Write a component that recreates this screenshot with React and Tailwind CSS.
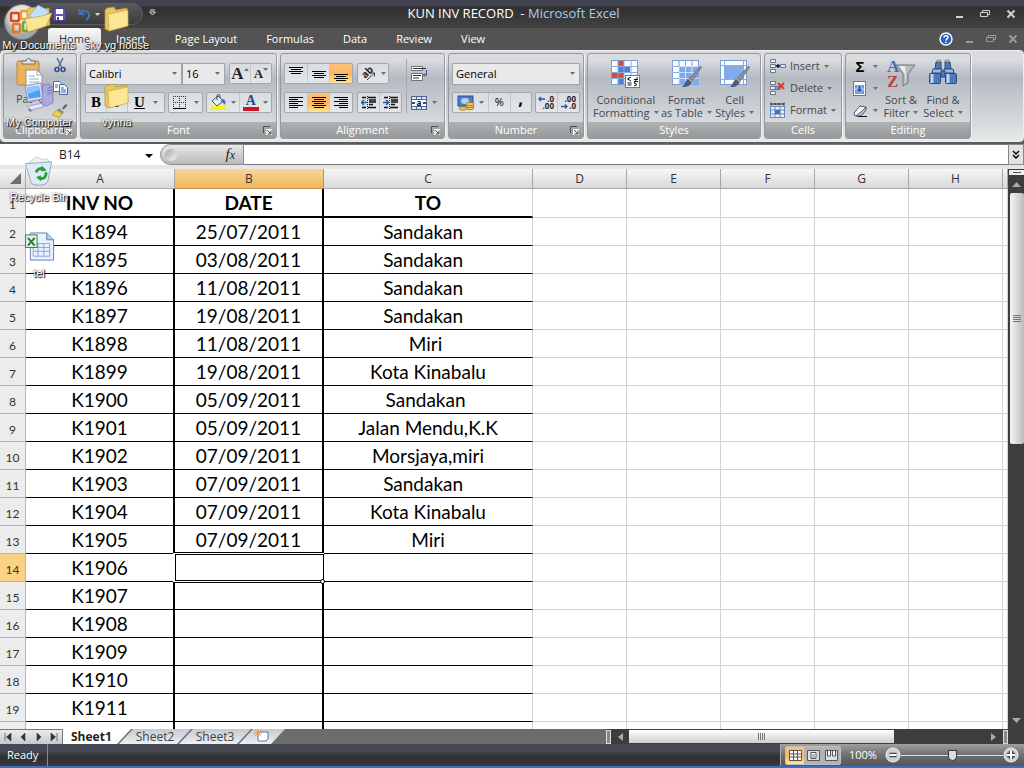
import { useState } from "react";

// some of the town names were typed with trailing spaces, which shifts them when centered
const ROWS = [
  ["K1894", "25/07/2011", "Sandakan  "],
  ["K1895", "03/08/2011", "Sandakan  "],
  ["K1896", "11/08/2011", "Sandakan  "],
  ["K1897", "19/08/2011", "Sandakan  "],
  ["K1898", "11/08/2011", "Miri "],
  ["K1899", "19/08/2011", "Kota Kinabalu"],
  ["K1900", "05/09/2011", "Sandakan "],
  ["K1901", "05/09/2011", "Jalan Mendu,K.K"],
  ["K1902", "07/09/2011", "Morsjaya,miri"],
  ["K1903", "07/09/2011", "Sandakan  "],
  ["K1904", "07/09/2011", "Kota Kinabalu"],
  ["K1905", "07/09/2011", "Miri"],
  ["K1906", "", ""],
  ["K1907", "", ""],
  ["K1908", "", ""],
  ["K1909", "", ""],
  ["K1910", "", ""],
  ["K1911", "", ""],
];
const TABS = ["Home", "Insert", "Page Layout", "Formulas", "Data", "Review", "View"];
const EMPTY_COLS = ["D", "E", "F", "G", "H", ""];

/* ---------- small pieces ---------- */

function Caret({ className = "" }) {
  return (
    <svg width="5" height="3" viewBox="0 0 5 3" className={`shrink-0 ${className}`}>
      <path d="M0 0h5L2.500 3z" fill="#6b6e72" />
    </svg>
  );
}

function Launcher({ name }) {
  return (
    <button aria-label={`${name} options`} className="absolute right-1 top-1">
      <svg width="9" height="9" viewBox="0 0 9 9">
        <path d="M.5 7V.5H7" fill="none" stroke="#4c4f52" />
        <path d="M3 3h6v6H3z" fill="#f5f5f5" />
        <path d="M4 4l4 4M8 4.500V8H4.500" fill="none" stroke="#444" />
      </svg>
    </button>
  );
}

function Group({ name, launcher, className, children }) {
  return (
    <section
      aria-label={name}
      className={`flex shrink-0 flex-col overflow-hidden rounded-[3px] border border-[#96999d] shadow-[1px_1px_0_#f2f3f4] ${className}`}
    >
      <div className="min-h-0 flex-1">{children}</div>
      <div className="relative h-4 bg-linear-to-b from-[#b0b3b3] to-[#959898] text-center leading-4 text-white">
        {name}
        {launcher && <Launcher name={name} />}
      </div>
    </section>
  );
}

function ButtonBox({ className = "", children }) {
  return (
    <div className={`flex h-[21px] divide-x divide-[#c3c7cb] overflow-hidden rounded-[2px] border border-[#a3a8ad] bg-linear-to-b from-[#d9dde2] to-[#e3e7ea] ${className}`}>
      {children}
    </div>
  );
}

function Tool({ label, active, children, className = "flex-1" }) {
  return (
    <button
      aria-label={label}
      className={`flex items-center justify-center gap-1 ${className} ${active ? "bg-linear-to-b from-[#fcc07c] via-[#fdb75c] to-[#fde58e]" : ""}`}
    >
      {children}
    </button>
  );
}

function Dropdown({ label, value, className }) {
  return (
    <div className={`relative h-[22px] border border-[#a0a4a8] bg-[#e9e9e9] ${className}`}>
      <select aria-label={label} defaultValue={value} className="h-full w-full appearance-none pl-[3px] text-black outline-none">
        <option>{value}</option>
      </select>
      <Caret className="pointer-events-none absolute right-1 top-2" />
    </div>
  );
}

/* ---------- ribbon icons ---------- */

// each line is [x, width]
function Lines({ lines, top = 2 }) {
  return (
    <svg width="16" height="16" viewBox="0 0 16 16" shapeRendering="crispEdges">
      {lines.map(([x, w], i) => (
        <rect key={i} x={x} y={top + i * 2} width={w} height="1" fill="#000" />
      ))}
    </svg>
  );
}

function IndentIcon({ right }) {
  return (
    <svg width="16" height="16" viewBox="0 0 16 16">
      <path d="M1 2.500h4M7 2.500h8M8 5h7M8 7h7M8 9.500h4M1 12.500h4M7 12.500h8" stroke="#111" strokeWidth="1.300" />
      <path d="M6.500 1v14" stroke="#222" strokeDasharray="1 1" />
      <path d={right ? "M0 7.500h5M3 5l2.500 2.500L3 10" : "M6 7.500H1M3 5L.5 7.500 3 10"} fill="none" stroke="#2e55a8" strokeWidth="1.500" />
    </svg>
  );
}

function PasteIcon() {
  return (
    <svg width="28" height="30" viewBox="0 0 28 30">
      <rect x="1" y="3" width="22" height="24" rx="2" fill="#eab457" stroke="#b8863a" />
      <path d="M6 6V3h4a2.500 2.500 0 0 1 5 0h4v3z" fill="#dfe3e8" stroke="#6d7278" />
      <path d="M10 12h11l5 5v12H10z" fill="#fff" stroke="#8795aa" />
      <path d="M21 12v5h5M13 18h6M13 21h10M13 24h10" fill="none" stroke="#9aa9c2" />
    </svg>
  );
}

function CutIcon() {
  return (
    <svg width="12" height="15" viewBox="0 0 12 15" fill="none">
      <path d="M3 0l4.500 9M9 0L4.500 9" stroke="#5c7197" strokeWidth="1.500" />
      <circle cx="3" cy="11.500" r="2" stroke="#2c4f94" strokeWidth="1.600" />
      <circle cx="9" cy="11.500" r="2" stroke="#2c4f94" strokeWidth="1.600" />
    </svg>
  );
}

function CopyIcon() {
  return (
    <svg width="15" height="14" viewBox="0 0 15 14" stroke="#4a67a0">
      <path d="M.5.5h6l2 2v8h-8z" fill="#fff" />
      <path d="M6.500 3.500h5l3 3v7h-8z" fill="#eaf1ff" />
      <path d="M2 4h3M2 6h3M8 7h3M8 9h5M8 11h5" />
    </svg>
  );
}

function BrushIcon() {
  return (
    <svg width="16" height="15" viewBox="0 0 16 15">
      <path d="M10 5l4-4 1.500 1.500-4 4z" fill="#6e6046" />
      <path d="M7 5l5 4-1.500 2-5.500-4z" fill="#8a8f96" />
      <path d="M5 7l5 4-3 3.500L0 12z" fill="#f2d24c" stroke="#a98a28" strokeWidth=".7" />
    </svg>
  );
}

function BordersIcon() {
  return (
    <svg width="13" height="13" viewBox="0 0 13 13" fill="none" stroke="#333" shapeRendering="crispEdges">
      <path d="M0 .5h13M.5 0v12M12.500 0v12M6.500 0v12M0 6.500h13" strokeDasharray="1 1" />
      <path d="M0 12.500h13" stroke="#000" />
    </svg>
  );
}

function FillIcon() {
  return (
    <svg width="18" height="17" viewBox="0 0 18 17">
      <path d="M2 12h15v4H1z" fill="#f7f21c" />
      <path d="M3 7l6-5 5 5-6 5z" fill="#e7edf5" stroke="#3d567e" />
      <path d="M8 6V2a1.500 1.500 0 0 1 3 0v2" fill="none" stroke="#444" />
      <path d="M13 5c3 0 4 3 3 6-1-1-2-3-4-3z" fill="#3d6cb5" />
    </svg>
  );
}

function WrapIcon() {
  return (
    <svg width="17" height="16" viewBox="0 0 17 16">
      <path d="M.5.5h11v4H.5zM.5 7.500h11v7H.5z" fill="#fff" stroke="#70757c" />
      <path d="M2 2.500h13M2 9.500h8M2 12h6" stroke="#333" />
      <path d="M15.500 4v5h-3M14 7.500L12.500 9l1.500 1.500" fill="none" stroke="#2e4f8d" />
    </svg>
  );
}

function MergeIcon() {
  return (
    <svg width="16" height="16" viewBox="0 0 16 16">
      <rect x=".5" y="1.500" width="15" height="13" fill="#dce7fa" stroke="#4a6494" />
      <path d="M1 4.500h14M1 11.500h14M5.500 1v3M10.500 1v3M5.500 12v3M10.500 12v3" stroke="#4a6494" />
      <rect x="1" y="5" width="14" height="6" fill="#fff" />
      <path d="M1 8h3M12 8h3" stroke="#111" strokeWidth="1.500" />
      <text x="8" y="10.500" textAnchor="middle" fontSize="8" fontWeight="bold">a</text>
    </svg>
  );
}

function CurrencyIcon() {
  return (
    <svg width="18" height="16" viewBox="0 0 18 16">
      <rect x="1" y="1" width="15" height="10" fill="#4c7fca" stroke="#264f94" />
      <ellipse cx="8" cy="6" rx="4" ry="3" fill="#b7d2f3" />
      <g fill="#f1c95a" stroke="#8f681d" strokeWidth=".7">
        <ellipse cx="13" cy="13" rx="4" ry="1.700" />
        <ellipse cx="13" cy="11" rx="4" ry="1.700" />
        <ellipse cx="13" cy="9" rx="4" ry="1.700" />
        <ellipse cx="6" cy="13.500" rx="4" ry="1.700" />
      </g>
    </svg>
  );
}

function DecimalIcon({ less }) {
  return (
    <svg width="18" height="19" viewBox="0 0 18 19" fontSize="8" fontWeight="bold" fill="#222" className="overflow-visible">
      <text x="16" y="9" textAnchor="end">{less ? ".00" : ".0"}</text>
      <text x="16" y="16" textAnchor="end">{less ? ".0" : ".00"}</text>
      <path d={less ? "M1 13.500h6M5 11.500l2 2-2 2" : "M7 6H1M3 4L1 6l2 2"} fill="none" stroke="#2e55a8" strokeWidth="1.300" />
    </svg>
  );
}

function GridBase({ children }) {
  return (
    <svg width="31" height="30" viewBox="0 0 31 30">
      <rect x="1.500" y="1.500" width="26" height="24" fill="#fafcff" stroke="#7a9fd6" />
      {children}
    </svg>
  );
}

function PaintBrush() {
  return (
    <g>
      <path d="M29.500 7l1 1.500-9 13-3-2.500z" fill="#8a9098" stroke="#5c6168" strokeWidth=".6" />
      <path d="M18.500 19l3 2.500c-1 5-6 7-10.500 6.500 3-2 3-7 7.500-9z" fill="#4a5c86" />
      <path d="M18 19l4 3-1 1.500-4-3z" fill="#d89c4e" />
    </g>
  );
}

function ConditionalIcon() {
  return (
    <GridBase>
      <path d="M8 2h6v5H8zM2 14h12v6H2z" fill="#dc4a3c" />
      <path d="M8 8h12v6H8zM8 20h6v5H8z" fill="#4f7ed6" />
      <path d="M1.500 7.500h26M1.500 13.500h26M1.500 19.500h26M8 2v23M14 2v23M21 2v23" stroke="#8babdb" />
      <rect x="15.500" y="16.500" width="14" height="12" fill="#fff" stroke="#777" />
      <path d="M21 18l-3.500 2 3.500 2M17.500 24h4M17.500 26h4M24 20.500h4M24 22.500h4M27.500 18l-3 6M24 24l3 1.500-3 1.500" fill="none" stroke="#111" />
    </GridBase>
  );
}

function FormatTableIcon() {
  return (
    <GridBase>
      <path d="M8 8h20v18H8z" fill="#7fa9ea" />
      <path d="M1.500 7.500h26M1.500 13.500h26M1.500 19.500h26M8 2v23M14.500 2v23M21 2v23" stroke="#cfe0fa" />
      <path d="M8 2v5M14.500 2v5M21 2v5M2 7.500h6M2 13.500h6M2 19.500h6" stroke="#8babdb" />
      <PaintBrush />
    </GridBase>
  );
}

function CellStylesIcon() {
  return (
    <GridBase>
      <rect x="6" y="7" width="18" height="13" fill="#82abee" />
      <path d="M1.500 6.500h26M1.500 20.500h26M5.500 2v23M24.500 2v23" stroke="#8babdb" />
      <PaintBrush />
    </GridBase>
  );
}

function CellsIcon({ kind }) {
  if (kind === "Format") {
    return (
      <svg width="17" height="17" viewBox="0 0 17 17">
        <path d="M2 2h13M2 .5v3M15 .5v3M6 1v2M10 1v2" stroke="#222" />
        <rect x="1.500" y="4.500" width="14" height="11" fill="#e4edfb" stroke="#6988bd" />
        <path d="M1 8h15M1 12h15M6 5v11M11 5v11" stroke="#6988bd" />
        <rect x="6" y="8" width="5" height="4" fill="#3e70c4" />
      </svg>
    );
  }
  return (
    <svg width="17" height="17" viewBox="0 0 17 17">
      <path d="M1.500 1.500h5v3h-5zM1.500 6.500h5v3h-5zM1.500 11.500h5v3h-5z" fill="#f1f6fd" stroke="#6b7788" />
      {kind === "Insert" ? (
        <g>
          <path d="M11.500 6.500h5v3h-5z" fill="#dfeafc" stroke="#5577ad" />
          <path d="M7 8h4M9 6v4" stroke="#111" strokeWidth="1.300" />
        </g>
      ) : (
        <g>
          <path d="M6 6.500h5v3H6z" fill="#7ba4e4" stroke="#5577ad" />
          <path d="M9 3l6 6M15 3l-6 6" stroke="#dd3b2f" strokeWidth="2" />
        </g>
      )}
    </svg>
  );
}

function FillDownIcon() {
  return (
    <svg width="14" height="16" viewBox="0 0 14 16">
      <rect x=".5" y=".5" width="12" height="14" fill="#f7faff" stroke="#5879b2" />
      <path d="M2 4h9v9H2z" fill="#6e9ce6" />
      <path d="M5 4h3v4h2.500l-4 4-4-4H5z" fill="#2358b8" stroke="#fff" strokeWidth=".6" />
    </svg>
  );
}

function EraserIcon() {
  return (
    <svg width="15" height="14" viewBox="0 0 15 14" stroke="#4a5260">
      <path d="M1 9l6-7 6 1-5 8-6 1z" fill="#f8fafc" />
      <path d="M8 8l5-5v3l-5 6H3z" fill="#b9c7de" />
      <path d="M5 12.500h9" stroke="#111" />
    </svg>
  );
}

function SortIcon() {
  return (
    <svg width="30" height="30" viewBox="0 0 30 30">
      <text x="1" y="13" fontSize="17" fontWeight="bold" fontFamily="Liberation Serif, serif" fill="#3f6fb9">A</text>
      <text x="1" y="28" fontSize="17" fontWeight="bold" fontFamily="Liberation Serif, serif" fill="#b64545">Z</text>
      <path d="M10 6h19l-7 9v9l-5 3V15z" fill="#b9bcbf" stroke="#707478" />
      <path d="M13 7h6l1 8-1 9V15z" fill="#eceded" />
    </svg>
  );
}

function BinocularsIcon() {
  return (
    <svg width="30" height="28" viewBox="0 0 30 28">
      <g fill="#4f79b9" stroke="#2c4a80">
        <path d="M8 3h5v7H7zM17 3h5l1 7h-6z" />
        <path d="M5 10h9v4H4zM16 10h9l1 4H16z" fill="#9fb9de" />
        <rect x="1.500" y="14.500" width="11" height="10" rx="1" />
        <rect x="17.500" y="14.500" width="11" height="10" rx="1" />
        <path d="M13 12h4v6h-4z" />
      </g>
      <path d="M4 15v9M20 15v9" stroke="#bcd2f3" strokeWidth="3" />
      <path d="M9 1h4v2H9zM17 1h4v2h-4z" fill="#c7ccd4" stroke="#555" strokeWidth=".5" />
    </svg>
  );
}

/* ---------- header ---------- */

function OfficeButton() {
  return (
    <button aria-label="Office Button" className="absolute left-1 top-1 z-10">
      <svg width="37" height="37" viewBox="0 0 37 37">
        <defs>
          <radialGradient id="orb" cx=".5" cy=".35">
            <stop offset="0" stopColor="#ffffff" />
            <stop offset=".7" stopColor="#dcdcdc" />
            <stop offset="1" stopColor="#a6a6a6" />
          </radialGradient>
        </defs>
        <circle cx="18" cy="18" r="17.500" fill="url(#orb)" stroke="#777" />
        <g fill="none" strokeWidth="2.500">
          <rect x="7" y="9" width="8" height="8" rx="1" stroke="#d8471f" />
          <rect x="17" y="7" width="7" height="8" rx="1" stroke="#f0a02c" />
          <rect x="9" y="20" width="7" height="8" rx="1" stroke="#e2791f" />
          <rect x="19" y="18" width="8" height="9" rx="1" stroke="#69a93f" />
        </g>
      </svg>
    </button>
  );
}

function WindowButtons({ dim }) {
  return (
    <div className={`flex items-center ${dim ? "gap-3 text-[#9a9a9a]" : "gap-4 text-[#d0d0d0]"}`}>
      <button aria-label="Minimize">
        <svg width="9" height="10" viewBox="0 0 9 10"><path d="M1 8h7" stroke="currentColor" strokeWidth="2" /></svg>
      </button>
      <button aria-label="Restore">
        <svg width="10" height="10" viewBox="0 0 10 10" fill="none" stroke="currentColor">
          <path d="M.5 3.500h7v4h-7zM2.500 3V1.500h7v4H8" />
        </svg>
      </button>
      <button aria-label="Close">
        <svg width="10" height="10" viewBox="0 0 10 10"><path d="M1.500 1.500l7 7M8.500 1.500l-7 7" stroke="currentColor" strokeWidth="2" /></svg>
      </button>
    </div>
  );
}

function TitleBar() {
  return (
    <div className="relative flex h-7 shrink-0 items-center justify-end bg-linear-to-b from-[#424350] from-20% via-[#303030] via-25% to-[#424242] pr-2 text-white">
      <div className="absolute left-10 top-[3px] flex h-[22px] w-[103px] items-center gap-3 rounded-r-full border border-[#5c5c5c] bg-linear-to-b from-[#5a5a5a] to-[#3c3c3c] pl-3">
        <button aria-label="Save">
          <svg width="13" height="13" viewBox="0 0 13 13">
            <path d="M.5.5h12v12h-12z" fill="#6457b8" stroke="#4c3f94" />
            <path d="M3 1h7v5H3zM3 8h7v4H3z" fill="#fff" />
            <path d="M4 9h2v3H4z" fill="#4c3f94" />
          </svg>
        </button>
        <button aria-label="Undo" className="flex items-center gap-1">
          <svg width="13" height="13" viewBox="0 0 13 13" fill="none" stroke="#456fc0" strokeWidth="2">
            <path d="M1.500 1v5h5M2 6c2-5 10-4 9 2-.3 2-1.500 3-3 4" />
          </svg>
          <svg width="5" height="3" viewBox="0 0 5 3"><path d="M0 0h5L2.500 3z" fill="#ddd" /></svg>
        </button>
      </div>
      <button aria-label="Customize Quick Access Toolbar" className="absolute left-[149px] top-[9px]">
        <svg width="7" height="7" viewBox="0 0 7 7"><path d="M1 1h5" stroke="#ddd" /><path d="M.5 3h6l-3 3z" fill="none" stroke="#ddd" /></svg>
      </button>
      <h1 className="flex-1 whitespace-pre pl-[72px] text-center text-[13px]">
        KUN INV RECORD  - <span className="text-[#a9cdf5]">Microsoft Excel</span>
      </h1>
      <WindowButtons />
    </div>
  );
}

function TabBar() {
  const [tab, setTab] = useState("Home");
  return (
    <nav className="flex h-[22px] shrink-0 items-end bg-[#535353] pl-12 pr-[6px] text-[11px] text-white">
      {TABS.map((t) => (
        <button
          key={t}
          onClick={() => setTab(t)}
          className={`h-[22px] px-[11px] ${t === tab ? "mr-1 rounded-t-[3px] bg-linear-to-b from-[#f7f7f7] to-[#d5d7db] text-[#333]" : "mr-[7px]"}`}
        >
          {t}
        </button>
      ))}
      <div className="ml-auto flex h-full items-center gap-3">
        <button aria-label="Help">
          <svg width="14" height="14" viewBox="0 0 14 14">
            <circle cx="7" cy="7" r="6" fill="#2c62c4" stroke="#fff" strokeWidth="1.400" />
            <path d="M5 5.500c0-2.500 4-2.300 4-.2C9 7 7 6.800 7 8.500M7 9.500V11" fill="none" stroke="#fff" strokeWidth="1.400" />
          </svg>
        </button>
        <WindowButtons dim />
      </div>
    </nav>
  );
}

function BigTool({ icon, lines, className }) {
  return (
    <button className={`flex flex-col items-center pt-[5px] ${className}`}>
      <span className="flex h-[34px] items-start">{icon}</span>
      <span className="whitespace-nowrap leading-[13px]">{lines[0]}</span>
      <span className="flex items-center gap-1 whitespace-nowrap leading-[13px]">
        {lines[1]}
        <Caret />
      </span>
    </button>
  );
}

function Ribbon() {
  return (
    <div className="shrink-0 bg-[#5a5c5e] pb-[2px] text-[11px] text-[#45484c]">
      <div className="flex h-[92px] gap-[3px] overflow-hidden rounded-[4px] border border-[#eceded] bg-linear-to-b from-[#d9dbdf] from-10% via-[#b5bac2] via-30% to-[#e6e9e9] px-[2px] py-[2px]">
        <Group name="Clipboard" launcher className="w-[74px]">
          <div className="flex h-full justify-between pl-3 pr-2 pt-1">
            <button className="flex flex-col items-center">
              <PasteIcon />
              <span className="mt-1 leading-[13px]">Paste</span>
              <Caret className="mt-1" />
            </button>
            <div className="flex flex-col items-center justify-between pb-1">
              <button aria-label="Cut"><CutIcon /></button>
              <button aria-label="Copy"><CopyIcon /></button>
              <button aria-label="Format Painter"><BrushIcon /></button>
            </div>
          </div>
        </Group>

        <Group name="Font" launcher className="w-[197px]">
          <div className="flex flex-col gap-[7px] px-1 pt-[9px]">
            <div className="flex">
              <Dropdown label="Font" value="Calibri" className="w-[97px]" />
              <Dropdown label="Font size" value="16" className="w-[43px]" />
              <ButtonBox className="ml-auto w-[43px] font-['Liberation_Serif',serif] font-bold text-[#222]">
                <Tool label="Grow font"><span className="text-[17px] leading-4">A</span><Caret className="mb-2 -ml-1 rotate-180" /></Tool>
                <Tool label="Shrink font"><span className="text-[13px] leading-4">A</span><Caret className="mb-2 -ml-1" /></Tool>
              </ButtonBox>
            </div>
            <div className="flex justify-between">
              <ButtonBox className="w-[80px] font-['Liberation_Serif',serif] text-[15px] text-black">
                <Tool label="Bold"><b>B</b></Tool>
                <Tool label="Italic"><b><i>I</i></b></Tool>
                <Tool label="Underline" className="w-9"><b className="underline">U</b><Caret className="ml-1" /></Tool>
              </ButtonBox>
              <ButtonBox className="w-[35px]">
                <Tool label="Borders"><BordersIcon /><Caret className="ml-1" /></Tool>
              </ButtonBox>
              <ButtonBox className="w-[66px]">
                <Tool label="Fill color"><FillIcon /><Caret /></Tool>
                <Tool label="Font color">
                  <span className="w-4 border-b-4 border-[#cc1626] text-center font-['Liberation_Serif',serif] text-[14px] font-bold leading-[12px] text-[#2c4a86]">A</span>
                  <Caret />
                </Tool>
              </ButtonBox>
            </div>
          </div>
        </Group>

        <Group name="Alignment" launcher className="w-[165px]">
          <div className="flex gap-1 px-[3px] pt-[9px]">
            <div className="flex flex-col gap-2">
              <ButtonBox className="w-[69px]">
                <Tool label="Top align"><Lines top={1} lines={[[1, 14], [3, 10], [1, 14], [3, 10]]} /></Tool>
                <Tool label="Middle align"><Lines top={5} lines={[[1, 14], [3, 10], [1, 14], [3, 10]]} /></Tool>
                <Tool label="Bottom align" active><Lines top={8} lines={[[1, 14], [3, 10], [1, 14], [3, 10]]} /></Tool>
              </ButtonBox>
              <ButtonBox className="w-[69px]">
                <Tool label="Align left"><Lines lines={[[1, 14], [1, 9], [1, 14], [1, 9], [1, 14], [1, 9]]} /></Tool>
                <Tool label="Center" active><Lines lines={[[1, 14], [3, 10], [1, 14], [3, 10], [1, 14], [3, 10]]} /></Tool>
                <Tool label="Align right"><Lines lines={[[1, 14], [6, 9], [1, 14], [6, 9], [1, 14], [6, 9]]} /></Tool>
              </ButtonBox>
            </div>
            <div className="flex flex-col gap-2">
              <ButtonBox className="w-8">
                <Tool label="Orientation">
                  <svg width="17" height="17" viewBox="0 0 17 17">
                    <text x="2" y="12" fontSize="10" fontWeight="bold" transform="rotate(-45 6 9)" fill="#222">ab</text>
                    <path d="M7 15L14.500 8M11 8h3.500v3.500" fill="none" stroke="#444" />
                  </svg>
                  <Caret />
                </Tool>
              </ButtonBox>
              <ButtonBox className="w-[45px]">
                <Tool label="Decrease indent"><IndentIcon /></Tool>
                <Tool label="Increase indent"><IndentIcon right /></Tool>
              </ButtonBox>
            </div>
            <div className="-mt-1 flex flex-col gap-2 border-l border-[#a5a9ae] pl-1 pt-1">
              <button aria-label="Wrap text" className="flex h-[21px] items-center"><WrapIcon /></button>
              <button aria-label="Merge and center" className="flex h-[21px] items-center gap-[5px]"><MergeIcon /><Caret /></button>
            </div>
          </div>
        </Group>

        <Group name="Number" launcher className="w-[136px]">
          <div className="flex flex-col gap-[7px] px-[3px] pt-[9px]">
            <Dropdown label="Number format" value="General" className="w-full" />
            <div className="flex justify-between">
              <ButtonBox className="w-[80px] text-black">
                <Tool label="Accounting format" className="w-9"><CurrencyIcon /><Caret /></Tool>
                <Tool label="Percent style">%</Tool>
                <Tool label="Comma style"><b className="pb-2 text-[17px] leading-3">,</b></Tool>
              </ButtonBox>
              <ButtonBox className="w-[45px]">
                <Tool label="Increase decimal"><DecimalIcon /></Tool>
                <Tool label="Decrease decimal"><DecimalIcon less /></Tool>
              </ButtonBox>
            </div>
          </div>
        </Group>

        <Group name="Styles" className="w-[174px]">
          <div className="flex justify-between px-1">
            <BigTool icon={<ConditionalIcon />} lines={["Conditional", "Formatting"]} className="w-[68px]" />
            <BigTool icon={<FormatTableIcon />} lines={["Format", "as Table"]} className="w-[54px]" />
            <BigTool icon={<CellStylesIcon />} lines={["Cell", "Styles"]} className="w-[43px]" />
          </div>
        </Group>

        <Group name="Cells" className="w-[78px]">
          <div className="flex flex-col gap-[5px] pl-1 pt-1">
            {["Insert", "Delete", "Format"].map((k) => (
              <button key={k} className="flex h-[17px] items-center gap-1">
                <CellsIcon kind={k} />
                {k}
                <Caret />
              </button>
            ))}
          </div>
        </Group>

        <Group name="Editing" className="w-[126px]">
          <div className="flex">
            <div className="flex w-[34px] flex-col gap-[5px] pl-[7px] pr-[2px] pt-1">
              <button aria-label="AutoSum" className="flex h-[17px] items-center justify-between"><b className="w-[14px] text-[15px] text-black">Σ</b><Caret /></button>
              <button aria-label="Fill" className="flex h-[17px] items-center justify-between"><FillDownIcon /><Caret /></button>
              <button aria-label="Clear" className="flex h-[17px] items-center justify-between"><EraserIcon /><Caret /></button>
            </div>
            <BigTool icon={<SortIcon />} lines={["Sort &", "Filter"]} className="w-[42px]" />
            <BigTool icon={<BinocularsIcon />} lines={["Find &", "Select"]} className="w-[42px]" />
          </div>
        </Group>
      </div>
    </div>
  );
}

function FormulaBar() {
  return (
    <div className="flex h-[25px] shrink-0 border-b-4 border-[#e6e6e6] bg-white text-[12px]">
      <label className="relative flex w-40 items-center">
        <input aria-label="Name Box" defaultValue="B14" className="w-full pl-[59px] text-[#222] outline-none" />
        <svg width="8" height="4" viewBox="0 0 8 4" className="absolute right-[7px] top-[10px]"><path d="M0 0h8L4 4z" /></svg>
      </label>
      <div className="flex w-[84px] items-center justify-between rounded-l-full border border-[#8b8b8b] bg-linear-to-b from-[#e8e8e8] to-[#b9b9b9] pl-1 pr-2">
        <span className="size-3 rounded-full bg-linear-to-br from-[#a9a9a9] to-[#f4f4f4]" />
        <button aria-label="Insert function" className="font-['Liberation_Serif',serif] text-[15px] italic leading-4 text-[#222]">
          f<span className="text-[12px]">x</span>
        </button>
      </div>
      <input aria-label="Formula bar" className="min-w-0 flex-1 border-y border-[#777] outline-none" />
      <button aria-label="Expand formula bar" className="flex w-4 items-center justify-center border border-[#888] bg-[#e3e3e3]">
        <svg width="8" height="9" viewBox="0 0 8 9" fill="none" stroke="#000" strokeWidth="1.500"><path d="M1 1l3 3 3-3M1 5l3 3 3-3" /></svg>
      </button>
    </div>
  );
}

/* ---------- sheet ---------- */

function SelectionFrame() {
  return (
    <div className="pointer-events-none absolute -left-[2px] -right-[2px] -top-[2px] -bottom-[2px] z-10 border-y border-black bg-white py-px pl-[2px]">
      <div className="h-full border border-black" />
      <span className="absolute -bottom-[2px] -right-px size-[5px] rounded-full border border-black bg-white" />
    </div>
  );
}

function RowHead({ n, active }) {
  return (
    <th
      scope="row"
      className={`border-b border-r border-[#b4b4b4] pt-1 text-center text-[12px] font-normal leading-5 text-[#333] ${active ? "bg-[#fbd185]" : "bg-[#ececec]"}`}
    >
      {n}
    </th>
  );
}

function Sheet() {
  const head = "border-b border-r border-[#a8a8a8] bg-linear-to-b from-[#f6f6f6] to-[#d9d9d9] font-normal";
  const blank = "border-b border-r border-[#ccd4d9]";
  return (
    <div className="min-w-0 flex-1 overflow-hidden bg-white">
      <table className="w-full table-fixed border-separate border-spacing-0 text-center">
        <colgroup>
          <col className="w-[26px]" />
          <col className="w-[149px]" />
          <col className="w-[149px]" />
          <col className="w-[209px]" />
          <col className="w-[94px]" />
          <col className="w-[94px]" />
          <col className="w-[94px]" />
          <col className="w-[94px]" />
          <col className="w-[94px]" />
          <col />
        </colgroup>
        <thead>
          <tr className="h-5 text-[12px] leading-[18px] text-[#333]">
            <th className={head}>
              <svg width="11" height="11" viewBox="0 0 11 11" className="ml-auto mr-1"><path d="M11 0v11H0z" fill="#6f6f6f" /></svg>
            </th>
            <th className={head}>A</th>
            <th className="border-b border-r border-[#c4904a] bg-linear-to-b from-[#f9d598] to-[#eeb65c] font-normal">B</th>
            <th className={head}>C</th>
            {EMPTY_COLS.map((c) => <th key={c} className={head}>{c}</th>)}
          </tr>
        </thead>
        <tbody className="whitespace-pre font-['Lato',sans-serif] text-[19px] leading-6 text-black">
          <tr className="h-[29px]">
            <RowHead n={1} />
            {["INV NO", "DATE", "TO"].map((t) => (
              <th key={t} className={`border-b-2 border-black ${t === "TO" ? "border-r border-r-[#ccd4d9]" : "border-r-2"}`}>{t}</th>
            ))}
            {EMPTY_COLS.map((c) => <td key={c} className={blank} />)}
          </tr>
          {ROWS.map(([inv, date, to], i) => (
            <tr key={inv} className="h-7">
              <RowHead n={i + 2} active={i === 12} />
              <td className="border-b border-r-2 border-black">{inv}</td>
              <td className="relative border-b border-r-2 border-black">
                {date}
                {i === 12 && <SelectionFrame />}
              </td>
              <td className="border-b border-r border-black border-r-[#ccd4d9]">{to}</td>
              {EMPTY_COLS.map((c) => <td key={c} className={blank} />)}
            </tr>
          ))}
          {/* the next row only peeks out above the sheet tabs */}
          <tr className="h-7">
            <RowHead />
            <td className="border-r-2 border-black" />
            <td className="border-r-2 border-black" />
            <td className={blank} />
            {EMPTY_COLS.map((c) => <td key={c} className={blank} />)}
          </tr>
        </tbody>
      </table>
    </div>
  );
}

function VScroll() {
  return (
    <div className="flex w-4 shrink-0 flex-col items-center bg-[#3d3d3d] pl-px">
      <div className="mt-px flex h-[5px] w-full items-center justify-center bg-[#eee]"><span className="h-px w-2 bg-[#555]" /></div>
      <button aria-label="Scroll up" className="flex h-[18px] items-center"><svg width="9" height="5" viewBox="0 0 9 5"><path d="M4.500 0L9 5H0z" fill="#aaa" /></svg></button>
      <div className="flex h-[251px] w-[14px] flex-col items-center justify-center gap-px rounded-[2px] bg-linear-to-r from-[#f6f6f6] to-[#bdbdbd]">
        <span className="h-px w-2 bg-[#777]" />
        <span className="h-px w-2 bg-[#777]" />
        <span className="h-px w-2 bg-[#777]" />
        <span className="h-px w-2 bg-[#777]" />
      </div>
      <button aria-label="Scroll down" className="mt-auto flex h-[18px] items-center"><svg width="9" height="5" viewBox="0 0 9 5"><path d="M0 0h9L4.500 5z" fill="#aaa" /></svg></button>
    </div>
  );
}

function SheetTabs() {
  const nav = [
    ["First sheet", "M1 0v8M7 0v8L2.500 4z"],
    ["Previous sheet", "M6 0v8L2 4z"],
    ["Next sheet", "M2 0v8l4-4z"],
    ["Last sheet", "M7 0v8M1 0v8l4.500-4z"],
  ];
  const slant = "[clip-path:polygon(14px_0,100%_0,calc(100%-14px)_100%,0_100%)]";
  return (
    <div className="flex h-[15px] shrink-0 bg-[#6c6c6c] text-[12px] leading-[15px]">
      <div className="flex w-[63px] shrink-0 items-center justify-around border-r border-t border-[#777] bg-linear-to-b from-[#e9ebee] to-[#c5c9ce]">
        {nav.map(([label, d]) => (
          <button key={label} aria-label={label}>
            <svg width="8" height="8" viewBox="0 0 8 8"><path d={d} fill="#333" stroke="#333" strokeWidth=".6" /></svg>
          </button>
        ))}
      </div>
      <button className="w-[68px] bg-white pl-2 pr-3 text-left font-bold text-[#222] [clip-path:polygon(0_0,100%_0,calc(100%-14px)_100%,0_100%)]">Sheet1</button>
      {["Sheet2", "Sheet3"].map((s) => (
        <button key={s} className={`-ml-3 w-[72px] bg-linear-to-b from-[#c3c9d3] to-[#edf0f3] text-center text-[#444] ${slant}`}>{s}</button>
      ))}
      <button aria-label="Insert worksheet" className={`-ml-3 flex w-[46px] justify-center bg-linear-to-b from-[#c3c9d3] to-[#edf0f3] ${slant}`}>
        <svg width="16" height="14" viewBox="0 0 16 14">
          <path d="M4 3h10v7l-2 2H4z" fill="#fff" stroke="#5b77b0" />
          <path d="M4 0v8M0 4h8M1 1l6 6M7 1L1 7" stroke="#e3a238" />
        </svg>
      </button>
      <div className="ml-auto flex w-[418px] items-center bg-[#3d3d3d]">
        <span className="h-[14px] w-[5px] border border-[#ddd] bg-[#888]" />
        <button aria-label="Scroll left" className="flex w-[18px] justify-center"><svg width="5" height="8" viewBox="0 0 5 8"><path d="M5 0v8L0 4z" fill="#aaa" /></svg></button>
        <div className="flex h-[13px] w-[265px] items-center justify-center gap-px bg-linear-to-b from-white to-[#cfcfcf]">
          <span className="h-[7px] w-px bg-[#777]" />
          <span className="h-[7px] w-px bg-[#777]" />
          <span className="h-[7px] w-px bg-[#777]" />
          <span className="h-[7px] w-px bg-[#777]" />
        </div>
        <button aria-label="Scroll right" className="ml-auto mr-[7px]"><svg width="5" height="8" viewBox="0 0 5 8"><path d="M0 0v8l5-4z" fill="#aaa" /></svg></button>
        <span className="mr-4 h-[14px] w-[5px] border border-[#ddd] bg-[#888]" />
      </div>
    </div>
  );
}

function ZoomButton({ label, d }) {
  return (
    <button aria-label={label} className="shrink-0">
      <svg width="16" height="16" viewBox="0 0 16 16">
        <circle cx="8" cy="8" r="7" fill="#cfcfcf" stroke="#f4f4f4" />
        <path d={d} stroke="#444" strokeWidth="4.500" />
        <path d={d} stroke="#fff" strokeWidth="2" />
      </svg>
    </button>
  );
}

function StatusBar() {
  return (
    <footer className="flex h-6 shrink-0 items-stretch border-b-2 border-[#3c6fc4] bg-linear-to-b from-[#474955] from-30% via-[#2e2e2e] via-60% to-[#3b3b3b] text-[11px] text-white">
      <span className="flex w-12 items-center border-r border-[#8a8a8a] pl-[7px]">Ready</span>
      <div className="ml-auto flex w-[244px] items-center border-l border-[#aaa] bg-linear-to-b from-[#a0a0a0] via-[#6f6f6f] to-[#555] pl-1">
        <div className="flex h-[19px] w-[56px] shrink-0 overflow-hidden rounded-[2px] border border-[#c0c0c0] bg-[#b3b3b3]">
          <Tool label="Normal view" active>
            <svg width="13" height="11" viewBox="0 0 13 11"><path d="M.5.5h12v10H.5zM.5 4h12M.5 7h12M4.500 0v11M8.500 0v11" fill="#fff" stroke="#555" /></svg>
          </Tool>
          <Tool label="Page layout view">
            <svg width="13" height="11" viewBox="0 0 13 11"><path d="M.5.5h12v10H.5z" fill="#ddd" stroke="#555" /><path d="M4 2.500h5v6H4z" fill="#fff" stroke="#555" /><path d="M5 5h3M5 7h3" stroke="#777" /></svg>
          </Tool>
          <Tool label="Page break preview">
            <svg width="13" height="11" viewBox="0 0 13 11"><path d="M.5.5h12v10H.5z" fill="#ddd" stroke="#555" /><path d="M2.500 1v5h3V1M7.500 1v5h3V1" fill="#fff" stroke="#555" /></svg>
          </Tool>
        </div>
        <span className="ml-2 w-8 shrink-0">100%</span>
        <div className="ml-1 mr-[5px] flex min-w-0 flex-1 items-center">
          <ZoomButton label="Zoom out" d="M4.500 8h7" />
          <input
            type="range"
            aria-label="Zoom"
            defaultValue="50"
            className="h-3 w-0 flex-1 appearance-none bg-transparent bg-[linear-gradient(#ddd,#ddd)] bg-size-[100%_1px] bg-center bg-no-repeat [&::-webkit-slider-thumb]:h-[11px] [&::-webkit-slider-thumb]:w-[9px] [&::-webkit-slider-thumb]:appearance-none [&::-webkit-slider-thumb]:rounded-b-full [&::-webkit-slider-thumb]:border [&::-webkit-slider-thumb]:border-[#333] [&::-webkit-slider-thumb]:bg-[#ddd]"
          />
          <ZoomButton label="Zoom in" d="M4 8h8M8 4v8" />
        </div>
      </div>
    </footer>
  );
}

/* ---------- desktop icons that float above the window ---------- */

function FolderIcon({ open }) {
  return (
    <svg width="30" height="30" viewBox="0 0 30 30">
      <path d="M3 6l2-2 7-1 2 3 11-2 1 17-19 6-4-2z" fill="#e9c65c" stroke="#b8923a" strokeWidth=".7" />
      {open && <path d="M5 12L14 1l11 6-8 12z" fill="#bfe0fa" stroke="#7ba9d2" strokeWidth=".7" />}
      <path d={open ? "M1 15l17-3 10-3-6 13-18 6z" : "M6 10l20-4v16L7 27z"} fill="#fbe694" stroke="#c9a545" strokeWidth=".7" />
    </svg>
  );
}

function ComputerIcon() {
  return (
    <svg width="32" height="30" viewBox="0 0 32 32">
      <path d="M20 4l7-1 4 3v17l-7 4-5-3z" fill="#a9a9dc" stroke="#7a79b8" strokeWidth=".8" />
      <path d="M25 8l5-2M25 11l5-2M25 14l5-2" stroke="#6d6dae" />
      <path d="M1 5l17-3 2 17L4 22z" fill="#dcdcf4" stroke="#8a8ac4" />
      <path d="M3 7l13-2 2 12L5 19z" fill="#4f9df0" />
      <path d="M3 7l13-2 1 4L4 14z" fill="#8ac8fb" />
      <path d="M9 22l7-1 3 5-13 2z" fill="#c7c6ec" />
      <path d="M3 27l15-3 4 3-14 4z" fill="#e7e6fa" stroke="#8a8ac4" strokeWidth=".7" />
    </svg>
  );
}

function RecycleIcon() {
  return (
    <svg width="30" height="30" viewBox="0 0 30 31">
      <path d="M5 6l8-5 6 3 5-1 2 6H4z" fill="#f1f3e8" stroke="#a9b7c4" strokeWidth=".6" />
      <path d="M1 8l27-2-4 21c-3 4-14 4-17 1z" fill="#dcebf7" fillOpacity=".9" stroke="#8aa9c6" />
      <g fill="none" stroke="#2c9e3a" strokeWidth="3">
        <path d="M12 17c1-4 5-5 8-3M22 17c1 4-2 7-6 6" />
      </g>
      <path d="M18 10l5 5-6 1zM17 20v6l-5-4z" fill="#2c9e3a" />
    </svg>
  );
}

function WorkbookIcon() {
  return (
    <svg width="31" height="30" viewBox="0 0 31 31">
      <path d="M6 1h17l7 7v21H6z" fill="#e9f1fd" stroke="#5f82bd" />
      <path d="M23 1v7h7" fill="#b4cbee" stroke="#5f82bd" />
      <path d="M9 12h17v13H9zM9 16h17M9 20h17M14 12v13M20 12v13" fill="none" stroke="#88a7d8" />
      <rect x="1" y="3" width="12" height="13" fill="#e7f3e2" stroke="#3b8146" />
      <path d="M3.500 6l7 8M10.500 6l-7 8" stroke="#2c7a39" strokeWidth="2" />
    </svg>
  );
}

function DesktopIcon({ icon, label, className }) {
  return (
    <a href="#desktop" className={`absolute z-20 flex w-24 flex-col items-center gap-1 ${className}`}>
      {icon}
      <span className="whitespace-nowrap font-['Liberation_Sans',sans-serif] text-[11px] leading-[14px] text-white [text-shadow:1px_1px_1px_#000,0_0_2px_#333]">{label}</span>
    </a>
  );
}

export default function App() {
  return (
    <main className="relative flex h-screen flex-col overflow-hidden bg-[#535353] font-['Open_Sans',sans-serif]">
      <header className="relative shrink-0">
        <TitleBar />
        <TabBar />
        <OfficeButton />
        <Ribbon />
      </header>
      <FormulaBar />
      <div className="flex min-h-0 flex-1">
        <Sheet />
        <VScroll />
      </div>
      <SheetTabs />
      <StatusBar />

      <DesktopIcon icon={<FolderIcon open />} label="My Documents" className="-left-[9px] top-1" />
      <DesktopIcon icon={<FolderIcon />} label="sky yg house" className="left-[69px] top-1" />
      <DesktopIcon icon={<ComputerIcon />} label="My Computer" className="-left-[9px] top-[81px]" />
      <DesktopIcon icon={<FolderIcon />} label="vynna" className="left-[69px] top-[81px]" />
      <DesktopIcon icon={<RecycleIcon />} label="Recycle Bin" className="-left-[9px] top-[156px]" />
      <DesktopIcon icon={<WorkbookIcon />} label="tel" className="-left-[9px] top-[232px]" />
    </main>
  );
}
